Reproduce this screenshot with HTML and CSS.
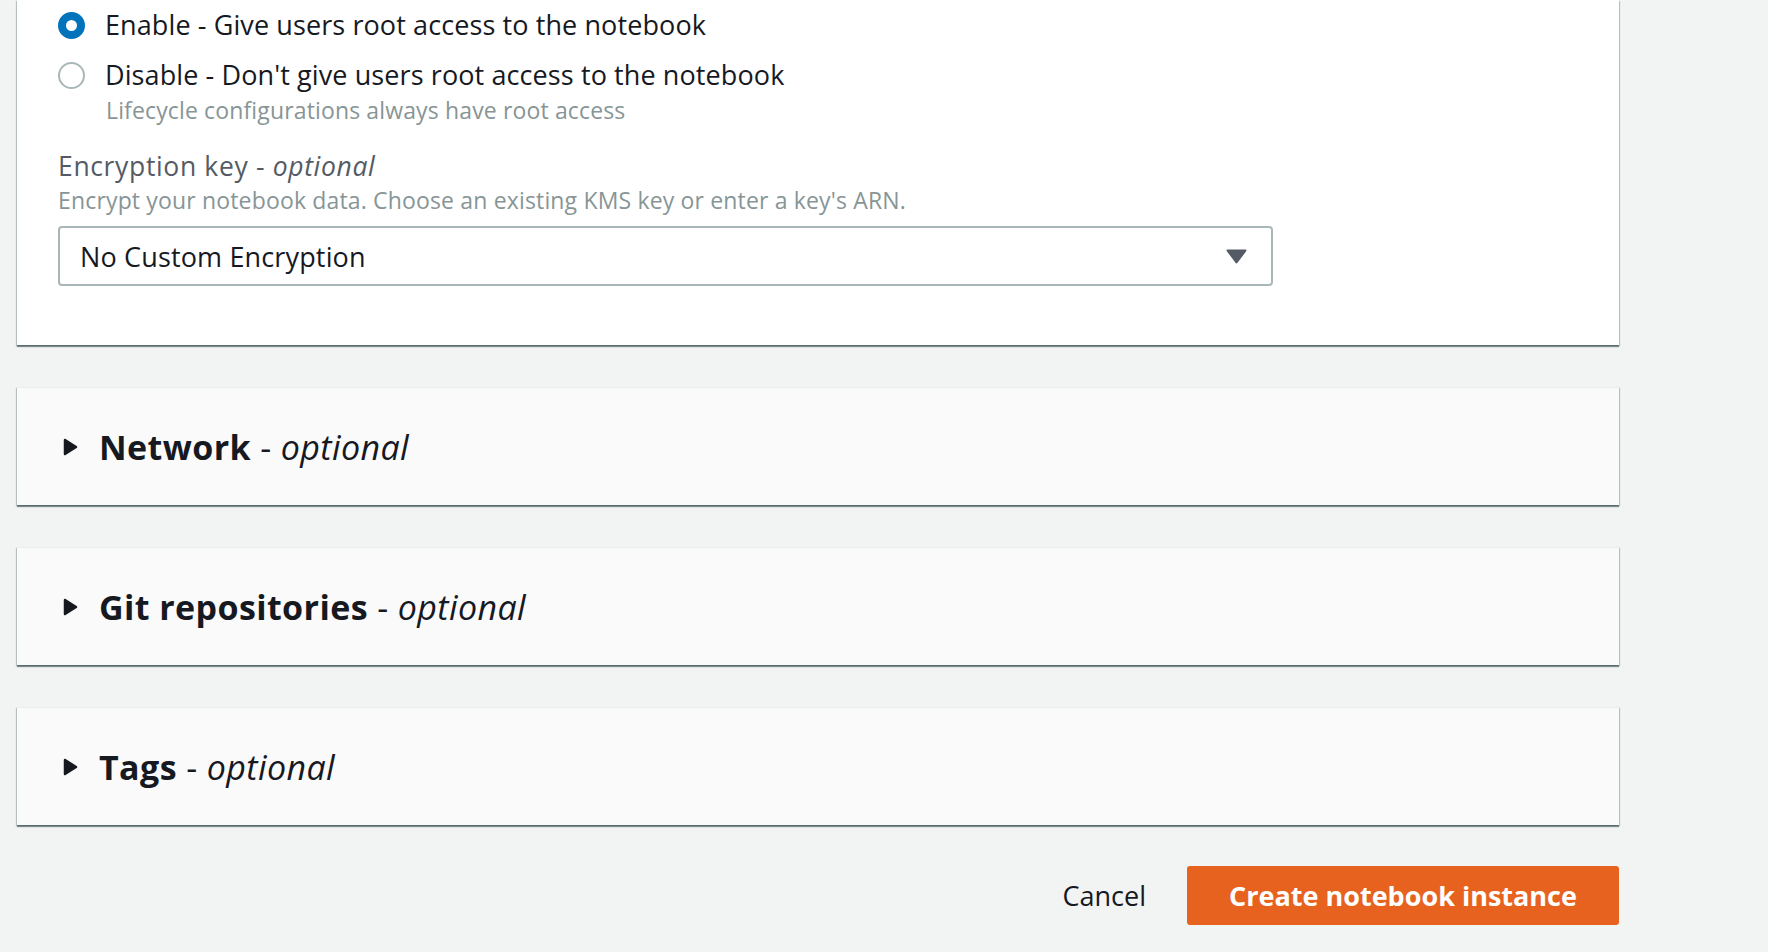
FILE: index.html
```html
<!DOCTYPE html>
<html lang="en">
<head>
<meta charset="utf-8">
<title>Create notebook instance</title>
<link rel="stylesheet" href="styles.css">
</head>
<body>
<main class="content">
  <section class="card card-main">
    <div class="radio-group">
      <label class="radio-row">
        <span class="radio radio-checked"></span>
        <span class="radio-label">Enable - Give users root access to the notebook</span>
      </label>
      <label class="radio-row">
        <span class="radio"></span>
        <span class="radio-label">Disable - Don't give users root access to the notebook</span>
      </label>
      <div class="radio-hint">Lifecycle configurations always have root access</div>
    </div>

    <div class="field">
      <div class="field-label">Encryption key - <em>optional</em></div>
      <div class="field-desc">Encrypt your notebook data. Choose an existing KMS key or enter a key's ARN.</div>
      <div class="select">
        <span class="select-value">No Custom Encryption</span>
        <svg class="select-caret" width="21" height="15" viewBox="0 0 21 15"><polygon points="1.5,1.5 19.5,1.5 10.5,13.5" fill="#545b64" stroke="#545b64" stroke-width="2" stroke-linejoin="round"/></svg>
      </div>
    </div>
  </section>

  <section class="card card-collapsed">
    <svg class="expander" width="15" height="18" viewBox="0 0 15 18"><polygon points="2,2 13,9 2,16" fill="#16191f" stroke="#16191f" stroke-width="2.5" stroke-linejoin="round"/></svg>
    <h2 class="section-title">Network <span class="opt">- <em>optional</em></span></h2>
  </section>

  <section class="card card-collapsed">
    <svg class="expander" width="15" height="18" viewBox="0 0 15 18"><polygon points="2,2 13,9 2,16" fill="#16191f" stroke="#16191f" stroke-width="2.5" stroke-linejoin="round"/></svg>
    <h2 class="section-title">Git repositories <span class="opt">- <em>optional</em></span></h2>
  </section>

  <section class="card card-collapsed">
    <svg class="expander" width="15" height="18" viewBox="0 0 15 18"><polygon points="2,2 13,9 2,16" fill="#16191f" stroke="#16191f" stroke-width="2.5" stroke-linejoin="round"/></svg>
    <h2 class="section-title">Tags <span class="opt">- <em>optional</em></span></h2>
  </section>

  <div class="actions">
    <button class="btn-link">Cancel</button>
    <button class="btn-primary">Create notebook instance</button>
  </div>
</main>
</body>
</html>
```

FILE: styles.css
```css
html, body {
  margin: 0;
  padding: 0;
}

body {
  background: #f2f3f3;
  font-family: "Open Sans", "Noto Sans", "Liberation Sans", sans-serif;
  color: #16191f;
}

.content {
  width: 1602px;
  margin-left: 17px;
  display: flex;
  flex-direction: column;
  gap: 42px;
}

.card {
  box-sizing: border-box;
  box-shadow: 0 2px 1px 0 rgba(0, 28, 36, 0.45), 1px 1px 1px 0 rgba(0, 28, 36, 0.18), -1px 1px 1px 0 rgba(0, 28, 36, 0.18);
}

.card-main {
  background: #ffffff;
  padding: 7px 41px 59px;
}

.radio-group {
  display: flex;
  flex-direction: column;
}

.radio-row {
  display: flex;
  align-items: center;
  gap: 20px;
  height: 36px;
  font-size: 27px;
  line-height: 36px;
  letter-spacing: 0.1px;
  color: #16191f;
}

.radio-row + .radio-row {
  margin-top: 14px;
}

.radio {
  box-sizing: border-box;
  width: 27px;
  height: 27px;
  border-radius: 50%;
  border: 2px solid #aab7b8;
  background: #ffffff;
  flex: none;
}

.radio-checked {
  border: 8px solid #0073bb;
}

.radio-hint {
  margin-top: 2px;
  margin-left: 48px;
  font-size: 23px;
  line-height: 30px;
  letter-spacing: 0.14px;
  color: #879596;
}

.field {
  margin-top: 24px;
}

.field-label {
  font-size: 26.5px;
  line-height: 34px;
  letter-spacing: 0.65px;
  color: #545b64;
}

.field-label em {
  font-style: italic;
}

.field-desc {
  margin-top: 2px;
  font-size: 23px;
  line-height: 30px;
  letter-spacing: 0.16px;
  color: #879596;
}

.select {
  box-sizing: border-box;
  margin-top: 11px;
  width: 1215px;
  height: 60px;
  border: 2px solid #aab7b8;
  border-radius: 4px;
  display: flex;
  align-items: center;
  justify-content: space-between;
  padding: 0 24px 0 20px;
  background: #ffffff;
}

.select-value {
  font-size: 27px;
  letter-spacing: 0.15px;
  color: #16191f;
}

.card-collapsed {
  height: 118px;
  background: #fafafa;
  border-top: 1px solid #eaeded;
  display: flex;
  align-items: center;
  padding-left: 46px;
  gap: 21px;
}

.section-title {
  margin: 0;
  font-size: 34px;
  font-weight: 700;
  letter-spacing: 0.4px;
  color: #16191f;
}

.section-title .opt {
  font-weight: 400;
}

.actions {
  display: flex;
  justify-content: flex-end;
  align-items: center;
  gap: 41px;
  margin-top: -1px;
}

.btn-link {
  border: none;
  background: none;
  padding: 0;
  font-family: inherit;
  font-size: 27px;
  color: #16191f;
  cursor: pointer;
}

.btn-primary {
  border: none;
  border-radius: 3px;
  background: #e8621f;
  color: #ffffff;
  font-family: inherit;
  font-size: 27px;
  font-weight: 700;
  height: 59px;
  width: 432px;
  cursor: pointer;
}
```
